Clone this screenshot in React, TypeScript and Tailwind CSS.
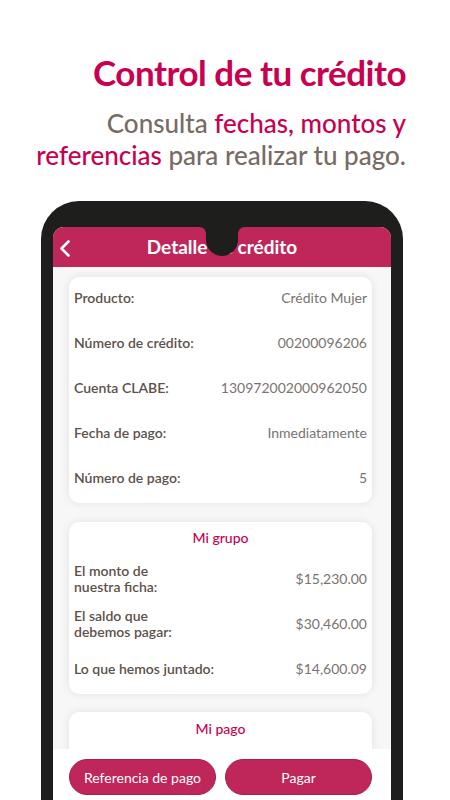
import React from 'react'

const font = { fontFamily: 'Lato, "Open Sans", sans-serif' }

const Row = ({ label, value }: { label: React.ReactNode; value: string }) => (
  <div className="flex items-center justify-between">
    <span className="text-[14px] leading-[16px] font-semibold text-[#5c514b]">{label}</span>
    <span className="text-[14px] leading-[16px] font-normal text-[#7a7370]">{value}</span>
  </div>
)

const Notch = () => (
  <svg
    className="absolute left-1/2 top-0 -translate-x-1/2"
    width="46"
    height="29"
    viewBox="0 0 46 29"
  >
    <path d="M0 0 H46 Q39 0 39 8 V13 A16 16 0 0 1 7 13 V8 Q7 0 0 0 Z" fill="#1e1e1c" />
  </svg>
)

const App = () => {
  return (
    <div className="h-[800px] w-[450px] overflow-hidden bg-white" style={font}>
      <div className="pt-[52px] pr-[44px] text-right">
        <h1 className="text-[35px] leading-[40px] font-bold tracking-[-0.5px] text-[#c8004f]">
          Control de tu crédito
        </h1>
        <p className="mt-[15px] text-[26px] leading-[32px] font-medium text-[#776b64]">
          Consulta <span className="text-[#c8004f]">fechas, montos y</span>
          <br />
          <span className="text-[#c8004f]">referencias</span> para realizar tu pago.
        </p>
      </div>

      <div className="mt-[30px] ml-[41px] w-[362px] h-[700px] rounded-t-[38px] bg-[#1e1e1c] px-[12px] pt-[26px]">
        <div className="relative h-full rounded-t-[11px] overflow-hidden bg-white">
          <div className="relative h-[40px] bg-[#bf2659] flex items-center justify-center">
            <svg
              className="absolute left-[6px] top-[13px]"
              width="12"
              height="17"
              viewBox="0 0 12 17"
              fill="none"
              stroke="white"
              strokeWidth="2.6"
              strokeLinecap="round"
              strokeLinejoin="round"
            >
              <path d="M9.5 1.5 L2.5 8.5 L9.5 15.5" />
            </svg>
            <h2 className="text-[19px] font-bold text-white">Detalle de crédito</h2>
          </div>
          <Notch />

          <div className="h-[482px] overflow-hidden bg-[#f7f7f7] pl-[16px] pr-[19px] pt-[10px]">
            <div className="rounded-[10px] bg-white px-[5px] pt-[13px] pb-[17px] shadow-[0_0_10px_rgba(0,0,0,0.09)] flex flex-col gap-[29px]">
              <Row label="Producto:" value="Crédito Mujer" />
              <Row label="Número de crédito:" value="00200096206" />
              <Row label="Cuenta CLABE:" value="130972002000962050" />
              <Row label="Fecha de pago:" value="Inmediatamente" />
              <Row label="Número de pago:" value="5" />
            </div>

            <div className="mt-[19px] h-[172px] rounded-[10px] bg-white px-[5px] pt-[7px] shadow-[0_0_10px_rgba(0,0,0,0.09)]">
              <div className="text-center text-[14px] leading-[18px] font-medium text-[#c8004f]">Mi grupo</div>
              <div className="mt-[16px]">
                <Row label={<>El monto de<br />nuestra ficha:</>} value="$15,230.00" />
              </div>
              <div className="mt-[13px]">
                <Row label={<>El saldo que<br />debemos pagar:</>} value="$30,460.00" />
              </div>
              <div className="mt-[21px]">
                <Row label="Lo que hemos juntado:" value="$14,600.09" />
              </div>
            </div>

            <div className="mt-[18px] h-[80px] rounded-[10px] bg-white px-[5px] pt-[8px] shadow-[0_0_10px_rgba(0,0,0,0.09)]">
              <div className="text-center text-[14px] leading-[18px] font-medium text-[#c8004f]">Mi pago</div>
            </div>
          </div>

          <div className="flex gap-[9px] bg-white pl-[16px] pr-[19px] pt-[10px]">
            <button className="flex-1 h-[36px] rounded-full bg-[#bf2659] border border-[#a81e4d] text-[14px] text-white">
              Referencia de pago
            </button>
            <button className="flex-1 h-[36px] rounded-full bg-[#bf2659] border border-[#a81e4d] text-[14px] text-white">
              Pagar
            </button>
          </div>
        </div>
      </div>
    </div>
  )
}

export default App
